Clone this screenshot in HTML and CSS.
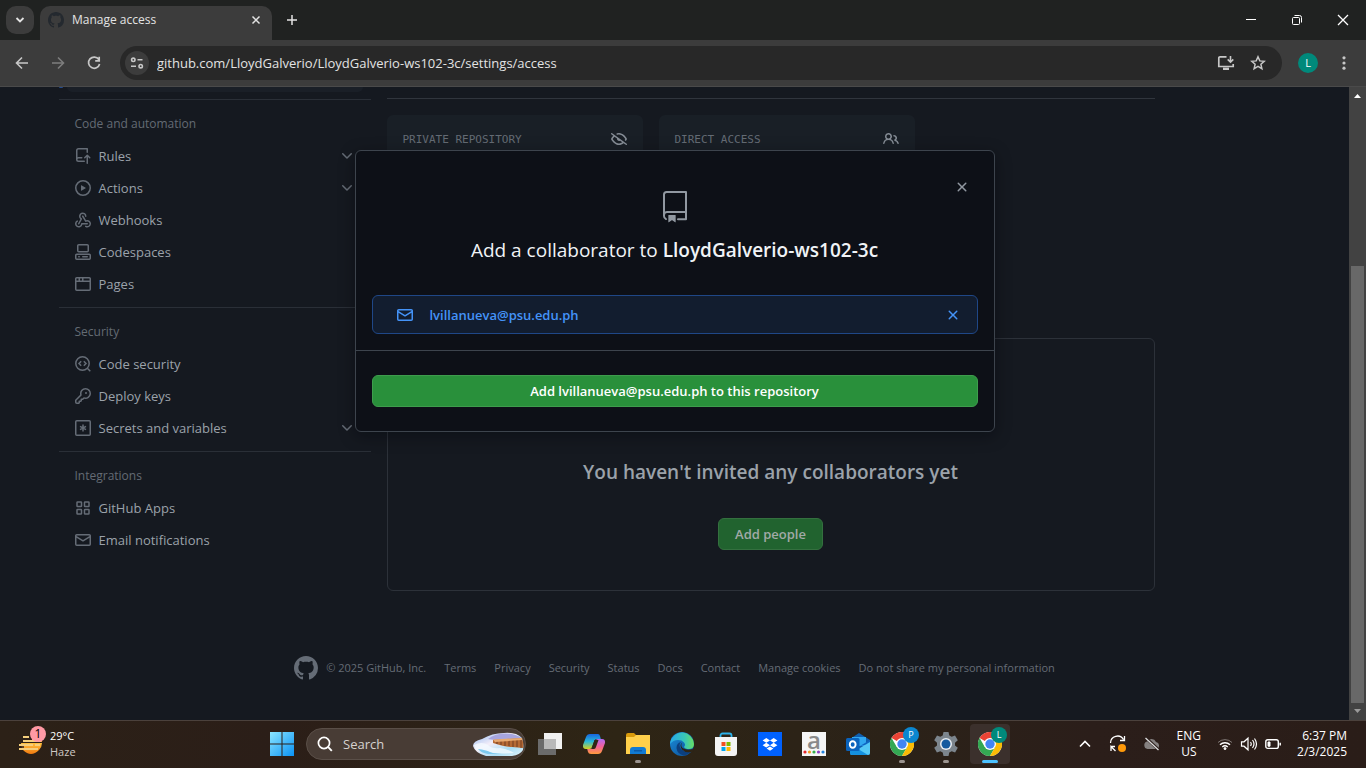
FILE: index.html
```html
<!DOCTYPE html>
<html lang="en">
<head>
<meta charset="utf-8">
<meta name="viewport" content="width=device-width, initial-scale=1">
<title>Manage access</title>
<link rel="stylesheet" href="styles.css">
</head>
<body>
<svg class="defs" aria-hidden="true">
  <symbol id="mark" viewBox="0 0 16 16"><path d="M8 0C3.58 0 0 3.58 0 8c0 3.54 2.29 6.53 5.47 7.59.4.07.55-.17.55-.38 0-.19-.01-.82-.01-1.49-2.01.37-2.53-.49-2.69-.94-.09-.23-.48-.94-.82-1.13-.28-.15-.68-.52-.01-.53.63-.01 1.08.58 1.23.82.72 1.21 1.87.87 2.33.66.07-.52.28-.87.51-1.07-1.78-.2-3.64-.89-3.64-3.95 0-.87.31-1.59.82-2.15-.08-.2-.36-1.02.08-2.12 0 0 .67-.21 2.2.82.64-.18 1.32-.27 2-.27s1.36.09 2 .27c1.53-1.04 2.2-.82 2.2-.82.44 1.1.16 1.92.08 2.12.51.56.82 1.27.82 2.15 0 3.07-1.87 3.75-3.65 3.95.29.25.54.73.54 1.48 0 1.07-.01 1.93-.01 2.2 0 .21.15.46.55.38A8.01 8.01 0 0 0 16 8c0-4.42-3.58-8-8-8Z"/></symbol>
  <symbol id="chev" viewBox="0 0 16 16"><path d="M12.78 5.22a.749.749 0 0 1 0 1.06l-4.25 4.25a.749.749 0 0 1-1.06 0L3.22 6.28a.749.749 0 1 1 1.06-1.06L8 8.939l3.72-3.719a.749.749 0 0 1 1.06 0Z"/></symbol>
  <symbol id="x" viewBox="0 0 16 16"><path d="M3.72 3.72a.75.75 0 0 1 1.06 0L8 6.94l3.22-3.22a.749.749 0 0 1 1.275.326.749.749 0 0 1-.215.734L9.06 8l3.22 3.22a.749.749 0 0 1-.326 1.275.749.749 0 0 1-.734-.215L8 9.06l-3.22 3.22a.751.751 0 0 1-1.042-.018.751.751 0 0 1-.018-1.042L6.94 8 3.72 4.78a.75.75 0 0 1 0-1.06Z"/></symbol>
  <symbol id="mail" viewBox="0 0 16 16"><path d="M1.75 2h12.5c.966 0 1.75.784 1.75 1.75v8.5A1.75 1.75 0 0 1 14.25 14H1.75A1.75 1.75 0 0 1 0 12.25v-8.5C0 2.784.784 2 1.75 2ZM1.5 12.251c0 .138.112.25.25.25h12.5a.25.25 0 0 0 .25-.25V5.809L8.38 9.397a.75.75 0 0 1-.76 0L1.5 5.809v6.442Zm13-8.181v-.32a.25.25 0 0 0-.25-.25H1.75a.25.25 0 0 0-.25.25v.32L8 7.88Z"/></symbol>
  <symbol id="chrome" viewBox="0 0 24 24">
    <circle cx="12" cy="12" r="12" fill="#fff"/>
    <path d="M12 12 1.6 6A12 12 0 0 1 22.4 6H12Z" fill="#ea4335"/>
    <path d="M1.6 6A12 12 0 0 0 12 24l5.2-9L12 12 6.8 15Z" fill="#34a853"/>
    <path d="M22.4 6A12 12 0 0 1 12 24l5.2-9L12 6Z" fill="#fbbc05"/>
    <circle cx="12" cy="12" r="6" fill="#fff"/><circle cx="12" cy="12" r="4.700" fill="#4285f4"/>
  </symbol>
</svg>

<header class="tabstrip">
  <button class="tab-search" aria-label="Search tabs"><svg viewBox="0 0 12 12" class="line i12"><path d="m2.500 4 3.500 3.500L9.500 4" stroke-width="1.800"/></svg></button>
  <div class="tab">
    <svg class="i16 tab-icon"><use href="#mark"/></svg>
    <span class="tab-title">Manage access</span>
    <button class="plain" aria-label="Close tab"><svg viewBox="0 0 12 12" class="line i12"><path d="m2.500 2.500 7 7m0-7-7 7" stroke-width="1.500"/></svg></button>
  </div>
  <button class="plain new-tab" aria-label="New tab"><svg viewBox="0 0 12 12" class="line i12"><path d="M6 1v10M1 6h10" stroke-width="1.500"/></svg></button>
  <div class="window-buttons">
    <button class="plain" aria-label="Minimize"><svg viewBox="0 0 12 12" class="line i12"><path d="M1 5.500h10"/></svg></button>
    <button class="plain" aria-label="Restore"><svg viewBox="0 0 12 12" class="line i12"><rect x="1.500" y="3.500" width="7" height="7" rx="1"/><path d="M3.500 1.500h5a2 2 0 0 1 2 2v5"/></svg></button>
    <button class="plain" aria-label="Close"><svg viewBox="0 0 12 12" class="line i12"><path d="m1 1 10 10M11 1 1 11" stroke-width="1.300"/></svg></button>
  </div>
</header>

<div class="toolbar">
  <button class="plain" aria-label="Back"><svg viewBox="0 0 16 16" class="line i16"><path d="M14 8H3m5-5.500L2.500 8 8 13.500" stroke-width="1.600"/></svg></button>
  <button class="plain faded" aria-label="Forward"><svg viewBox="0 0 16 16" class="line i16"><path d="M2 8h11M8 2.500 13.500 8 8 13.500" stroke-width="1.600"/></svg></button>
  <button class="plain" aria-label="Reload"><svg viewBox="0 0 16 16" class="line i16"><path d="M12.800 4.500A5.600 5.600 0 1 0 13.600 9M13.200 1.800v4H9.200" stroke-width="1.700"/></svg></button>
  <div class="omnibox">
    <button class="site-info" aria-label="Site information"><svg viewBox="0 0 16 16" class="line i16"><g stroke-width="1.600"><circle cx="4.300" cy="4.800" r="1.700"/><path d="M8.500 4.800h5M2 11.200h5"/><circle cx="11.700" cy="11.200" r="1.700"/></g></svg></button>
    <input class="url" type="text" aria-label="Address" value="github.com/LloydGalverio/LloydGalverio-ws102-3c/settings/access">
    <button class="plain" aria-label="Install"><svg viewBox="0 0 18 18" class="line i18"><path d="M9.500 2.800H3a1.200 1.200 0 0 0-1.200 1.200v8.500h14.400V10" stroke-width="1.700"/><path d="M6 14.800h6" stroke-width="2.400"/><path d="M13.500 2v6m-2.800-2.600 2.800 2.800 2.800-2.800" stroke-width="1.600"/></svg></button>
    <button class="plain" aria-label="Bookmark"><svg viewBox="0 0 16 16" class="line i16"><path d="m8 1.800 1.800 4.100 4.400.4-3.300 3 1 4.400L8 11.400l-3.900 2.300 1-4.400-3.300-3 4.400-.4Z" stroke-width="1.500"/></svg></button>
  </div>
  <button class="avatar" aria-label="Profile">L</button>
  <button class="plain" aria-label="Menu"><svg viewBox="0 0 16 16" class="i16"><circle cx="8" cy="2.800" r="1.600"/><circle cx="8" cy="8" r="1.600"/><circle cx="8" cy="13.200" r="1.600"/></svg></button>
</div>

<div class="viewport">
  <div class="page">
    <div class="layout">
      <nav class="sidebar" aria-label="Settings">
        <div class="current"><i></i><b></b></div>
        <section>
          <h2>Code and automation</h2>
          <a href="#"><svg class="i16" viewBox="0 0 16 16"><path d="M1 2.500A2.500 2.500 0 0 1 3.500 0h8.750a.75.75 0 0 1 .75.75v3.500a.75.75 0 0 1-1.500 0V1.500h-8a1 1 0 0 0-1 1v6.708A2.493 2.493 0 0 1 3.500 9h3.250a.75.75 0 0 1 0 1.500H3.500a1 1 0 0 0 0 2h5.750a.75.75 0 0 1 0 1.500H3.500A2.500 2.500 0 0 1 1 11.500Zm13.230 7.790-1.225-1.224v6.184a.75.75 0 0 1-1.500 0V9.066L10.280 10.290a.75.75 0 0 1-1.060-1.061l2.505-2.504a.75.75 0 0 1 1.060 0L15.290 9.230a.751.751 0 0 1-1.060 1.060Z"/></svg><span>Rules</span><svg class="i16"><use href="#chev"/></svg></a>
          <a href="#"><svg class="i16" viewBox="0 0 16 16"><path d="M8 0a8 8 0 1 1 0 16A8 8 0 0 1 8 0ZM1.500 8a6.500 6.500 0 1 0 13 0 6.500 6.500 0 0 0-13 0Zm4.879-2.773 4.264 2.559a.25.25 0 0 1 0 .428l-4.264 2.559A.25.25 0 0 1 6 10.559V5.442a.25.25 0 0 1 .379-.215Z"/></svg><span>Actions</span><svg class="i16"><use href="#chev"/></svg></a>
          <a href="#"><svg class="i16" viewBox="0 0 16 16"><path d="M5.500 4.250a2.250 2.250 0 0 1 4.500 0 .75.75 0 0 0 1.500 0 3.750 3.750 0 1 0-6.140 2.889l-2.272 4.258a.75.75 0 0 0 1.324.706L7 7.250a.75.75 0 0 0-.309-1.015A2.250 2.250 0 0 1 5.500 4.250Z"/><path d="M7.364 3.607a.75.75 0 0 1 1.030.257l2.608 4.349a3.750 3.750 0 1 1-.628 6.785.75.75 0 0 1 .752-1.299 2.250 2.250 0 1 0-.033-3.880.75.75 0 0 1-1.030-.256L7.107 4.636a.75.75 0 0 1 .257-1.030Z"/><path d="M2.900 8.776A.75.75 0 0 1 2.625 9.800 2.250 2.250 0 1 0 6 11.750a.75.75 0 0 1 .75-.751h5.500a.75.75 0 0 1 0 1.500H7.425a3.751 3.751 0 1 1-5.550-3.998.75.75 0 0 1 1.024.274Z"/></svg><span>Webhooks</span></a>
          <a href="#"><svg class="i16" viewBox="0 0 16 16"><path d="M0 11.250c0-.966.784-1.750 1.750-1.750h12.500c.966 0 1.750.784 1.750 1.750v3A1.750 1.750 0 0 1 14.250 16H1.750A1.750 1.750 0 0 1 0 14.250Zm2-9.500C2 .784 2.784 0 3.750 0h8.500C13.216 0 14 .784 14 1.750v5a1.750 1.750 0 0 1-1.750 1.750h-8.500A1.750 1.750 0 0 1 2 6.750Zm1.750-.25a.25.25 0 0 0-.25.25v5c0 .138.112.25.25.25h8.500a.25.25 0 0 0 .25-.25v-5a.25.25 0 0 0-.25-.25Zm-2 9.500a.25.25 0 0 0-.25.25v3c0 .138.112.25.25.25h12.500a.25.25 0 0 0 .25-.25v-3a.25.25 0 0 0-.25-.25Z"/><path d="M7 12.750a.75.75 0 0 1 .75-.75h4.500a.75.75 0 0 1 0 1.500h-4.500a.75.75 0 0 1-.75-.75Zm-4 0a.75.75 0 0 1 .75-.75h.5a.75.75 0 0 1 0 1.500h-.5a.75.75 0 0 1-.75-.75Z"/></svg><span>Codespaces</span></a>
          <a href="#"><svg class="i16" viewBox="0 0 16 16"><path d="M0 2.750C0 1.784.784 1 1.750 1h12.500c.966 0 1.750.784 1.750 1.750v10.500A1.750 1.750 0 0 1 14.250 15H1.750A1.750 1.750 0 0 1 0 13.250ZM14.500 6h-13v7.250c0 .138.112.25.25.25h12.500a.25.25 0 0 0 .25-.25Zm-6-3.500v2h6V2.750a.25.25 0 0 0-.25-.25ZM5 2.500v2h2v-2Zm-3.250 0a.25.25 0 0 0-.25.25V4.500h2v-2Z"/></svg><span>Pages</span></a>
        </section>
        <section>
          <h2>Security</h2>
          <a href="#"><svg class="i16 line" viewBox="0 0 16 16" stroke-width="1.500"><circle cx="7.500" cy="7.500" r="6.700"/><path d="m12.300 12.300 3 3M6.200 5.300 4 7.500l2.200 2.200M8.800 5.300 11 7.500 8.800 9.700"/></svg><span>Code security</span></a>
          <a href="#"><svg class="i16" viewBox="0 0 16 16"><path d="M10.500 0a5.499 5.499 0 1 1-1.288 10.848l-.932.932a.749.749 0 0 1-.53.22H7v.75a.749.749 0 0 1-.22.53l-.5.5a.749.749 0 0 1-.53.22H5v.75a.749.749 0 0 1-.22.53l-.5.5a.749.749 0 0 1-.53.22h-2A1.750 1.750 0 0 1 0 14.250v-2c0-.199.079-.389.22-.53l4.932-4.932A5.500 5.500 0 0 1 10.500 0Zm-4 5.500c-.001.431.069.86.205 1.269a.75.75 0 0 1-.181.768L1.500 12.560v1.690c0 .138.112.25.25.25h1.690l.06-.06v-1.190a.75.75 0 0 1 .75-.75h1.190l.06-.06v-1.190a.75.75 0 0 1 .75-.75h1.190l1.023-1.025a.75.75 0 0 1 .768-.18A4 4 0 1 0 6.500 5.500ZM11 6a1 1 0 1 1 0-2 1 1 0 0 1 0 2Z"/></svg><span>Deploy keys</span></a>
          <a href="#"><svg class="i16 line" viewBox="0 0 16 16" stroke-width="1.500"><rect x=".75" y=".75" width="14.500" height="14.500" rx="1"/><path d="M8 4.500v7M5 6.300l6 3.400M11 6.300 5 9.700"/></svg><span>Secrets and variables</span><svg class="i16"><use href="#chev"/></svg></a>
        </section>
        <section>
          <h2>Integrations</h2>
          <a href="#"><svg class="i16 line" viewBox="0 0 16 16" stroke-width="1.500"><rect x="2" y="2" width="4.500" height="4.500" rx=".6"/><rect x="9.500" y="2" width="4.500" height="4.500" rx=".6"/><rect x="2" y="9.500" width="4.500" height="4.500" rx=".6"/><rect x="9.500" y="9.500" width="4.500" height="4.500" rx=".6"/></svg><span>GitHub Apps</span></a>
          <a href="#"><svg class="i16"><use href="#mail"/></svg><span>Email notifications</span></a>
        </section>
      </nav>
      <main>
        <div class="cards">
          <article><span>PRIVATE REPOSITORY</span><svg class="i16" viewBox="0 0 16 16"><path d="M.143 2.310a.75.75 0 0 1 1.047-.167l14.500 10.500a.75.75 0 1 1-.88 1.214l-2.248-1.628C11.346 13.190 9.792 14 8 14c-1.981 0-3.670-.992-4.933-2.078C1.797 10.832.88 9.577.43 8.900a1.619 1.619 0 0 1 0-1.797c.353-.533.995-1.420 1.868-2.305L.31 3.357A.75.75 0 0 1 .143 2.310Zm1.536 5.622A.12.12 0 0 0 1.657 8c0 .021.006.045.022.068.412.621 1.242 1.750 2.366 2.717C5.175 11.758 6.527 12.500 8 12.500c1.195 0 2.310-.488 3.290-1.191L9.063 9.695A2 2 0 0 1 6.058 7.520L3.529 5.688a14.207 14.207 0 0 0-1.850 2.244ZM8 3.500c-.516 0-1.017.09-1.499.251a.75.75 0 1 1-.473-1.423A6.207 6.207 0 0 1 8 2c1.981 0 3.670.992 4.933 2.078 1.270 1.091 2.187 2.345 2.637 3.023a1.620 1.620 0 0 1 0 1.798c-.11.166-.248.365-.41.587a.75.75 0 1 1-1.210-.887c.148-.201.272-.382.371-.53a.119.119 0 0 0 0-.137c-.412-.621-1.242-1.750-2.366-2.717C10.825 4.242 9.473 3.500 8 3.500Z"/></svg></article>
          <article><span>DIRECT ACCESS</span><svg class="i16" viewBox="0 0 16 16"><path d="M2 5.500a3.500 3.500 0 1 1 5.898 2.549 5.508 5.508 0 0 1 3.034 4.084.75.75 0 1 1-1.482.235 4 4 0 0 0-7.900 0 .75.75 0 0 1-1.482-.236A5.507 5.507 0 0 1 3.102 8.050 3.493 3.493 0 0 1 2 5.500ZM11 4a3.001 3.001 0 0 1 2.220 5.018 5.010 5.010 0 0 1 2.560 3.012.749.749 0 0 1-.885.954.752.752 0 0 1-.549-.514 3.507 3.507 0 0 0-2.522-2.372.75.75 0 0 1-.574-.73v-.352a.75.75 0 0 1 .416-.672A1.500 1.500 0 0 0 11 5.500.75.75 0 0 1 11 4Zm-5.500-.5a2 2 0 1 0-.001 3.999A2 2 0 0 0 5.500 3.500Z"/></svg></article>
        </div>
        <section class="blank">
          <h3>You haven't invited any collaborators yet</h3>
          <button class="add-people">Add people</button>
        </section>
      </main>
    </div>
    <footer class="site-footer">
      <span class="legal"><svg class="i24"><use href="#mark"/></svg>© 2025 GitHub, Inc.</span>
      <a href="#">Terms</a><a href="#">Privacy</a><a href="#">Security</a><a href="#">Status</a><a href="#">Docs</a><a href="#">Contact</a><a href="#">Manage cookies</a><a href="#">Do not share my personal information</a>
    </footer>
    <div class="overlay">
      <div class="dialog" role="dialog" aria-modal="true" aria-labelledby="dialog-title">
        <div class="dialog-head">
          <button class="plain dialog-close" aria-label="Close"><svg class="i16"><use href="#x"/></svg></button>
          <svg class="i32" viewBox="0 0 24 24"><path d="M3 2.750A2.750 2.750 0 0 1 5.750 0h14.500a.75.75 0 0 1 .75.75v20.500a.75.75 0 0 1-.75.75h-6a.75.75 0 0 1 0-1.500h5.250v-4H6A1.500 1.500 0 0 0 4.500 18v.75c0 .716.43 1.334 1.050 1.605a.75.75 0 0 1-.6 1.374A3.250 3.250 0 0 1 3 18.750ZM19.500 1.500H5.750c-.69 0-1.250.56-1.250 1.250v12.651A2.989 2.989 0 0 1 6 15h13.500Z"/><path d="M7 18.250a.25.25 0 0 1 .25-.25h5a.25.25 0 0 1 .25.25v5.010a.25.25 0 0 1-.397.201l-2.206-1.604a.25.25 0 0 0-.294 0L7.397 23.460a.25.25 0 0 1-.397-.2v-5.010Z"/></svg>
          <h1 id="dialog-title">Add a collaborator to <strong>LloydGalverio-ws102-3c</strong></h1>
        </div>
        <div class="selected">
          <svg class="i16"><use href="#mail"/></svg>
          <span>lvillanueva@psu.edu.ph</span>
          <button class="plain" aria-label="Remove"><svg class="i16"><use href="#x"/></svg></button>
        </div>
        <div class="dialog-foot"><button class="confirm">Add lvillanueva@psu.edu.ph to this repository</button></div>
      </div>
    </div>
  </div>
  <div class="scrollbar" aria-hidden="true">
    <svg viewBox="0 0 17 17" class="arrow up"><path d="m5 11 3.500-4 3.500 4Z"/></svg>
    <div class="track"></div><div class="thumb"></div>
    <svg viewBox="0 0 17 17" class="arrow"><path d="m5 6 3.500 4L12 6Z"/></svg>
  </div>
</div>

<footer class="taskbar">
  <button class="weather">
    <span class="weather-icon">
      <svg viewBox="0 0 28 28" class="i28"><defs><linearGradient id="sun" x2="0" y2="1"><stop stop-color="#ffc23e"/><stop offset="1" stop-color="#f07a10"/></linearGradient></defs><path d="M3 13h21q0 4-3 7-4 4-8 4t-8-4q-2-3-2-7Z" fill="url(#sun)"/><path d="M14 8h10v4H14Z" fill="#f2a93b"/><path d="M5 7h6M5 11h18M1 15h14M17 15h5M1 19h19" stroke="#f5cf7d" stroke-width="2"/><path d="M8 9h6M1 17h5" stroke="#2d1f17" stroke-width="1.500"/></svg>
      <span class="count">1</span>
    </span>
    <span class="weather-text"><b>29°C</b><span>Haze</span></span>
  </button>
  <div class="apps">
    <button class="app" aria-label="Start"><svg viewBox="0 0 24 24" class="i24"><defs><linearGradient id="win" x2="1" y2="1"><stop stop-color="#8be6ff"/><stop offset="1" stop-color="#0a92f5"/></linearGradient></defs><path fill="url(#win)" d="M0 0h11.500v11.500H0ZM12.500 0H24v11.500H12.500ZM0 12.500h11.500V24H0ZM12.500 12.500H24V24H12.500Z"/></svg></button>
    <label class="search">
      <svg viewBox="0 0 16 16" class="line i16"><circle cx="7" cy="7" r="5.600" stroke-width="1.700"/><path d="m11.200 11.200 3.600 3.600" stroke-width="1.900"/></svg>
      <input type="text" placeholder="Search" aria-label="Search">
      <svg viewBox="0 0 52 26" class="spotlight"><defs><linearGradient id="snow" x2="1" y2="1"><stop stop-color="#8db7f2"/><stop offset=".4" stop-color="#f4eef8"/><stop offset=".7" stop-color="#a9ddf5"/><stop offset="1" stop-color="#e4f4fa"/></linearGradient></defs>
        <path d="M1 15q0-5 9-7Q20 2 32 2q12-1 18 5 2 6 1 12-3 5-11 6H14Q3 22 1 15Z" fill="url(#snow)"/><path d="M16 8q9-7 24-5 8 2 10 5l-22 2Z" fill="#a7a5df"/><path d="M21 9 50 7q2 6 1 10l-11-1q-7 0-19-4Z" fill="#b66a35"/><path d="M25 9v4M29 9v5M33 9v6M37 8v7M41 8v8M45 8v8M49 8v9" stroke="#703d22"/><path d="M21 8.500 50 7v2l-27 2Z" fill="#e7aa72"/><path d="M2 14q8-4 14 0 4 4 12 3 8 1 14 5-14 1-20 0T4 19Z" fill="#f4faff" opacity=".8"/><path d="M6 18q8 1 12 3t18 2H16Q9 22 6 18Z" fill="#7cc9ee"/></svg>
    </label>
    <button class="app" aria-label="Task view"><svg viewBox="0 0 24 24" class="i24"><path fill="#f1f1f1" d="M6 1h18v16H6Z"/><path fill="#6b6b6b" d="M0 7h18v16H0Z"/><path fill="#b9b9b9" d="M6 7h12v10H6Z"/></svg></button>
    <button class="app" aria-label="Copilot"><svg viewBox="0 0 24 24" class="i24"><defs><linearGradient id="cpa" x2="0" y2="1"><stop stop-color="#1765e0"/><stop offset=".5" stop-color="#29b8d8"/><stop offset="1" stop-color="#d6d322"/></linearGradient><linearGradient id="cpb" x2="0" y2="1"><stop stop-color="#b06af5"/><stop offset=".5" stop-color="#f2609a"/><stop offset="1" stop-color="#ff9b3b"/></linearGradient></defs><path fill="url(#cpa)" d="M8 2h8q1.500 0 2 2l.8 3h-4q-2 0-2.600 2L10 15q-.5 2-2.500 2H4q-3.500 0-3-4l3-8q1-3 4-3Z"/><path fill="url(#cpb)" d="M16 22H9q-2.500 0-3-2l-.8-3H8q2.500 0 3-2l2.500-6q.5-2 2.500-2h4q3.500 0 3 4l-3 8q-1 3-4 3Z"/><path d="m12.500 8-3 9h2.500q1.500 0 2-2l2.500-7Z" fill="#302515"/></svg></button>
    <button class="app running" aria-label="File Explorer"><svg viewBox="0 0 24 24" class="i24"><path fill="#d99a0b" d="M0 3q0-2 2-2h6l3 3v4H0Z"/><path fill="#ffd04b" d="M0 5h8l2-2h14v19H0Z"/><path fill="#117bd3" d="M4 22v-4q0-3 3-3h10q3 0 3 3v4Z"/><path fill="#0b5aa8" d="M8 18h8v1.500H8Z"/></svg></button>
    <button class="app" aria-label="Edge"><svg viewBox="0 0 24 24" class="i24"><defs><linearGradient id="ea" x2="1"><stop stop-color="#28a9e8"/><stop offset=".6" stop-color="#38c6b8"/><stop offset="1" stop-color="#67df62"/></linearGradient><linearGradient id="eb" x2="1" y2="1"><stop stop-color="#1b8edb"/><stop offset="1" stop-color="#0b4b92"/></linearGradient></defs><circle cx="12" cy="12" r="12" fill="url(#eb)"/><path d="M.2 10.500A12 12 0 0 1 24 12q0 5-5 5-4 0-5-2 2-2 0-4.600Q12 8 8 8 3 8 .2 12Z" fill="url(#ea)"/><path d="M11 10q-3 3 0 7 4 4 10 2-3 4-7 4.500Q7 22 6.500 16 6.500 11 11 10Z" fill="#0c3f7e"/><path d="M12 10.500q-2 4 1.500 6 4 2 9 .5l1.500 2-3 1q-6 1-9-2.500-3-4 0-7Z" fill="#2e2415"/></svg></button>
    <button class="app" aria-label="Store"><svg viewBox="0 0 24 24" class="i24"><path d="M6.500 7V3.500a2 2 0 0 1 2-2h7a2 2 0 0 1 2 2V7" fill="none" stroke="#2cb2ea" stroke-width="1.800"/><path fill="#f4f4f4" d="M1 5h22v16q0 3-3 3H4q-3 0-3-3Z"/><path fill="#f25022" d="M7.500 10h4v4h-4Z"/><path fill="#7fba00" d="M12.500 10h4v4h-4Z"/><path fill="#00a4ef" d="M7.500 15h4v4h-4Z"/><path fill="#ffb900" d="M12.500 15h4v4h-4Z"/></svg></button>
    <button class="app" aria-label="Dropbox"><svg viewBox="0 0 24 24" class="i24"><path fill="#0061fe" d="M0 0h24v24H0Z"/><path fill="#fff" d="m8.300 6 3.700 2.400-3.700 2.400L4.600 8.400Zm7.400 0 3.700 2.400-3.700 2.400L12 8.400Zm-7.400 4.800 3.700 2.400-3.700 2.400-3.700-2.400Zm7.400 0 3.700 2.400-3.700 2.400-3.700-2.400ZM12 14.400l3.400 2.200L12 18.800l-3.400-2.200Z"/></svg></button>
    <button class="app" aria-label="Dictionary"><span class="letter-app">a<svg viewBox="0 0 24 5"><circle cx="3" cy="2" r="1.600" fill="#e5252a"/><circle cx="7.500" cy="2" r="1.600" fill="#f39a1e"/><circle cx="12" cy="2" r="1.600" fill="#35ab4c"/><circle cx="16.500" cy="2" r="1.600" fill="#8b3fc4"/><circle cx="21" cy="2" r="1.600" fill="#2283de"/></svg></span></button>
    <button class="app" aria-label="Outlook"><svg viewBox="0 0 24 24" class="i24"><path fill="#0f5fb0" d="M4 7 13 1l11 7v13q0 2-2 2H6q-2 0-2-2Z"/><path fill="#31a8f0" d="M6 5h14v9H6Z"/><path fill="#1066c2" d="m14 14 10-6v4Z"/><path fill="#54c8f5" d="M4 22 24 10v11q0 2-2 2H6Z"/><path fill="#1490df" d="m4 12 18 11H6q-2 0-2-2Z"/><rect y="6" width="13.500" height="13" rx="1.500" fill="#0a63bd"/><ellipse cx="6.700" cy="12.500" rx="2.900" ry="3.300" fill="none" stroke="#fff" stroke-width="1.900"/></svg></button>
    <button class="app running" aria-label="Chrome, profile P"><svg class="i24"><use href="#chrome"/></svg><span class="profile blue">P</span></button>
    <button class="app running" aria-label="Settings"><svg viewBox="0 0 24 24" class="i24"><path fill="#7c858d" d="m9.500 0h5l.8 3.500 2.400 1.300L21 3.600l2.800 4.600L21 10.800v2.600l2.800 2.400-2.700 4.700-3.400-1.200-2.400 1.300-.8 3.400h-5l-.8-3.400-2.400-1.300-3.400 1.200L.2 15.800 3 13.400v-2.600L.2 8.200 3 3.600l3.300 1.200 2.400-1.300Z"/><circle cx="12" cy="12" r="6" fill="#e9eef2"/><circle cx="12" cy="12" r="4.500" fill="#145a9f"/></svg></button>
    <button class="app active" aria-label="Chrome, profile L"><svg class="i24"><use href="#chrome"/></svg><span class="profile teal">L</span></button>
  </div>
  <div class="tray">
    <button class="plain" aria-label="Show hidden icons"><svg viewBox="0 0 16 16" class="line i16"><path d="m3 10.500 5-5 5 5" stroke-width="1.600"/></svg></button>
    <button class="plain" aria-label="Updates"><svg viewBox="0 0 18 18" class="line i18"><path d="M1.500 8A7 7 0 0 1 14.500 4.500M15.500 1v4.500H11M1.500 11.500H6M2 16v-4.500L6.500 16" stroke-width="1.300"/><circle cx="13" cy="13" r="4" class="orange"/></svg></button>
    <button class="plain" aria-label="OneDrive"><svg viewBox="0 0 18 18" class="i18"><path fill="#858180" d="M4.500 14a3.800 3.800 0 0 1-.5-7.400A5 5 0 0 1 13 7a3.700 3.700 0 0 1 1 7Z"/><path d="m3 3 13 12" stroke="#2b1e1a" stroke-width="3"/><path d="m2.500 3 13 12" stroke="#dedede" stroke-width="1.300"/></svg></button>
    <button class="plain stack mid">ENG<br>US</button>
    <button class="plain status" aria-label="Network, sound and battery">
      <svg viewBox="0 0 16 16" class="line i16"><path d="M1 6.500a10 10 0 0 1 14 0" opacity=".4"/><path d="M3 8.800a7 7 0 0 1 10 0M5.300 11a4 4 0 0 1 5.400 0" stroke-width="1.400"/><circle cx="8" cy="12.600" r="1" fill="currentColor"/></svg>
      <svg viewBox="0 0 18 16" class="line i18"><path d="M1.500 5.800v4.400H4l4 3.600V2.200l-4 3.600ZM10.500 6q1.500 2 0 4M12.500 4q3 4 0 8M14.500 2.500q4 5.500 0 11" stroke-width="1.200"/></svg>
      <svg viewBox="0 0 16 16" class="line i16"><rect x=".8" y="3.800" width="12.500" height="8.600" rx="2" stroke-width="1.400"/><path d="M15.200 6.800v2.600" stroke-width="1.500"/><path d="M3 6h2v4.200H3Z" fill="currentColor"/></svg>
    </button>
    <button class="plain stack end">6:37 PM<br>2/3/2025</button>
  </div>
</footer>
</body>
</html>
```
FILE: styles.css
```css
* { box-sizing: border-box; }

body {
  margin: 0;
  height: 100vh;
  display: flex;
  flex-direction: column;
  overflow: hidden;
  background: #151920;
  font-family: "Open Sans", "Noto Sans", sans-serif;
  font-size: 13px;
  line-height: 20px;
}

button, input { font: inherit; color: inherit; }
a { color: inherit; text-decoration: none; }
h1, h2, h3 { margin: 0; }
svg { display: block; flex: none; fill: currentColor; }

.defs { position: absolute; width: 0; height: 0; }
.i12 { width: 12px; height: 12px; }
.i16 { width: 16px; height: 16px; }
.i18 { width: 18px; height: 18px; }
.i24 { width: 24px; height: 24px; }
.i28 { width: 28px; height: 28px; }
.i32 { width: 32px; height: 32px; }
.line { fill: none; stroke: currentColor; }
.plain {
  display: flex;
  align-items: center;
  justify-content: center;
  padding: 0;
  border: 0;
  background: none;
}

/* Browser frame */
.tabstrip {
  flex: none;
  height: 40px;
  display: flex;
  align-items: center;
  padding-left: 6px;
  background: #202221;
  color: #e3e3e3;
  font-size: 12px;
}
.tab-search {
  width: 28px;
  height: 28px;
  padding: 8px;
  border: 0;
  border-radius: 10px;
  background: #3c3c3c;
}
.tab {
  align-self: flex-end;
  width: 232px;
  height: 34px;
  margin-left: 6px;
  padding: 0 10px 6px 8px;
  display: flex;
  align-items: center;
  gap: 8px;
  border-radius: 10px 10px 0 0;
  background: #3c3c3c;
}
.tab-icon { color: #24292f; }
.tab-title { flex: 1; }
.new-tab { margin-left: 14px; }
.window-buttons { display: flex; margin-left: auto; }
.window-buttons button { width: 46px; height: 40px; color: #fff; }

.toolbar {
  flex: none;
  height: 47px;
  display: flex;
  align-items: center;
  padding: 0 14px;
  gap: 20px;
  border-bottom: 1px solid #4a4a4a;
  background: #3c3c3c;
  color: #c7c7c7;
}
.faded { color: #7d7d7d; }
.omnibox {
  flex: 1;
  height: 34px;
  margin-left: -2px;
  margin-right: -4px;
  padding: 0 16px 0 5px;
  display: flex;
  align-items: center;
  gap: 15px;
  border-radius: 17px;
  background: #282828;
}
.site-info {
  width: 24px;
  height: 24px;
  padding: 4px;
  border: 0;
  border-radius: 12px;
  background: #3c3c3c;
}
.url {
  flex: 1;
  min-width: 0;
  margin-left: -7px;
  padding: 0;
  border: 0;
  background: none;
  color: #e3e3e3;
}
.avatar {
  width: 20px;
  height: 20px;
  margin-right: -2px;
  padding: 0;
  border: 0;
  border-radius: 50%;
  background: #00897b;
  color: #fff;
  font-size: 11px;
  line-height: 20px;
}

/* Page */
.viewport { flex: 1; min-height: 0; display: flex; }
.page {
  position: relative;
  flex: 1;
  min-width: 0;
  overflow: hidden;
  color: #9ba2aa;
}
.layout {
  max-width: 1280px;
  margin: 0 auto;
  padding: 0 24px;
  display: grid;
  grid-template-columns: 312px minmax(0, 768px);
  gap: 16px;
}
.current {
  height: 5px;
  margin: 0 8px 7px 0;
  display: flex;
  gap: 4px;
}
.current i {
  width: 4px;
  height: 1px;
  border-radius: 0 0 2px 2px;
  background: #234a8c;
}
.current b { flex: 1; border-radius: 0 0 6px 6px; background: #1a1f27; }
.sidebar section { padding: 8px 0 7px; border-top: 1px solid #2a2f37; }
.sidebar h2 {
  padding: 6px 16px;
  color: #646b74;
  font-size: 12px;
  font-weight: 400;
}
.sidebar a {
  height: 32px;
  padding: 0 16px;
  display: flex;
  align-items: center;
  gap: 8px;
}
.sidebar a span { flex: 1; }
.sidebar svg { color: #656c76; }

.cards {
  display: flex;
  gap: 16px;
  margin-top: 11px;
  padding-top: 16px;
  border-top: 1px solid #30353d;
}
.cards article {
  width: 256px;
  height: 200px;
  padding: 15px 16px;
  display: flex;
  justify-content: space-between;
  border-radius: 6px;
  background: #191f26;
  color: #646b74;
  font-family: "DejaVu Sans Mono", "Liberation Mono", monospace;
  font-size: 11px;
}
.cards svg { margin-top: 1px; color: #868d96; }
.blank {
  min-height: 253px;
  margin-top: 23px;
  padding: 40px;
  display: flex;
  flex-direction: column;
  align-items: center;
  justify-content: flex-end;
  gap: 32px;
  border: 1px solid #2c3139;
  border-radius: 6px;
}
.blank h3 { font-size: 19px; line-height: 28px; font-weight: 600; }
.add-people {
  height: 32px;
  padding: 0 16px;
  border: 1px solid #34703f;
  border-radius: 6px;
  background: #21632f;
  color: #a2aaa7;
  font-weight: 600;
}
.site-footer {
  display: flex;
  align-items: center;
  justify-content: center;
  gap: 18px;
  margin-top: 65px;
  color: #656c76;
  font-size: 11px;
}
.legal { display: flex; align-items: center; gap: 8px; }

/* Dialog */
.overlay {
  position: absolute;
  inset: 0;
  padding-top: 63px;
  display: flex;
  align-items: flex-start;
  justify-content: center;
}
.dialog {
  width: 640px;
  max-width: 100%;
  border: 1px solid #3d444d;
  border-radius: 6px;
  background: #0d1017;
  box-shadow: 0 4px 16px #01040966;
  color: #f0f3f6;
}
.dialog-head {
  position: relative;
  padding: 40px 16px 30px;
  display: flex;
  flex-direction: column;
  align-items: center;
  gap: 12px;
}
.dialog-head > svg { color: #9198a1; }
.dialog-head h1 { font-size: 19px; line-height: 30px; font-weight: 400; }
.dialog-head strong { font-weight: 600; }
.dialog-close { position: absolute; top: 28px; right: 24px; color: #9198a1; }
.selected {
  margin: 0 16px 16px;
  padding: 9px 16px 8px 24px;
  display: flex;
  align-items: center;
  gap: 17px;
  border: 1px solid #1f4787;
  border-radius: 6px;
  background: #121d2f;
  color: #4493f8;
  font-weight: 600;
}
.selected span { flex: 1; }
.dialog-foot { padding: 24px 16px; border-top: 1px solid #3d444d; }
.confirm {
  display: block;
  width: 100%;
  height: 32px;
  padding: 0;
  border: 1px solid #3e9d4d;
  border-radius: 6px;
  background: #29903b;
  color: #fff;
  font-weight: 600;
}

.scrollbar {
  flex: none;
  width: 17px;
  display: flex;
  flex-direction: column;
  align-items: center;
  background: #424242;
  color: #9a9a9a;
}
.arrow { width: 17px; height: 17px; }
.up { color: #fff; }
.track { flex: 162; }
.thumb { flex: 437; width: 13px; background: #686868; }

/* Taskbar */
.taskbar {
  flex: none;
  height: 48px;
  display: flex;
  align-items: center;
  box-shadow: inset 0 1px #4b413c;
  background: linear-gradient(90deg, #2c2117, #2b1e18 20%, #2e2515 45%, #2b2218 65%, #2b1e1a 80%, #2a1d18);
  color: #fff;
  font-size: 12px;
}
.weather {
  width: 260px;
  padding: 0 0 0 18px;
  display: flex;
  align-items: center;
  gap: 4px;
  border: 0;
  background: none;
  text-align: left;
}
.weather-icon { position: relative; }
.count {
  position: absolute;
  top: -4px;
  left: 12px;
  width: 16px;
  height: 16px;
  border-radius: 50%;
  background: #ff99a4;
  color: #000;
  line-height: 16px;
  text-align: center;
}
.weather-text { display: flex; flex-direction: column; font-size: 11px; line-height: 16px; }
.weather-text b { font-weight: 400; }
.weather-text span { color: #cfc9c5; }
.apps { display: flex; align-items: center; }
.app {
  position: relative;
  width: 40px;
  height: 40px;
  margin: 0 2px;
  padding: 8px;
  border: 0;
  border-radius: 4px;
  background: none;
}
.running::after, .active::after {
  content: "";
  position: absolute;
  left: 50%;
  bottom: 1px;
  width: 6px;
  height: 3px;
  margin-left: -3px;
  border-radius: 2px;
  background: #9b948f;
}
.active { background: #3b302c; }
.active::after { width: 16px; margin-left: -8px; background: #4cc2ff; }
.search {
  width: 220px;
  height: 32px;
  margin: 0 2px;
  padding: 0 1px 0 10px;
  display: flex;
  align-items: center;
  gap: 10px;
  border: 1px solid #5a4f48;
  border-radius: 16px;
  background: #483c35;
}
.search input {
  flex: 1;
  min-width: 0;
  padding: 0;
  border: 0;
  background: none;
  font-size: 13px;
}
.search input::placeholder { color: #d6d2cf; opacity: 1; }
.spotlight { width: 52px; height: 26px; }
.letter-app {
  display: flex;
  flex-direction: column;
  width: 24px;
  height: 24px;
  background: #f5f5f5;
  color: #8a8a8a;
  font-size: 24px;
  font-weight: 600;
  line-height: 16px;
}
.letter-app svg { width: 24px; height: 5px; margin-top: 2px; }
.profile {
  position: absolute;
  top: 3px;
  right: 3px;
  width: 16px;
  height: 16px;
  border-radius: 50%;
  font-size: 9px;
  line-height: 16px;
}
.blue { background: #0b86d0; }
.teal { background: #00897b; }
.tray {
  margin-left: auto;
  padding-right: 19px;
  display: flex;
  align-items: center;
  gap: 16px;
}
.orange { fill: #ff9a0a; stroke: none; }
.stack { font-size: 12px; line-height: 16px; }
.mid { text-align: center; }
.status { gap: 7px; }
.end { text-align: right; }
```
